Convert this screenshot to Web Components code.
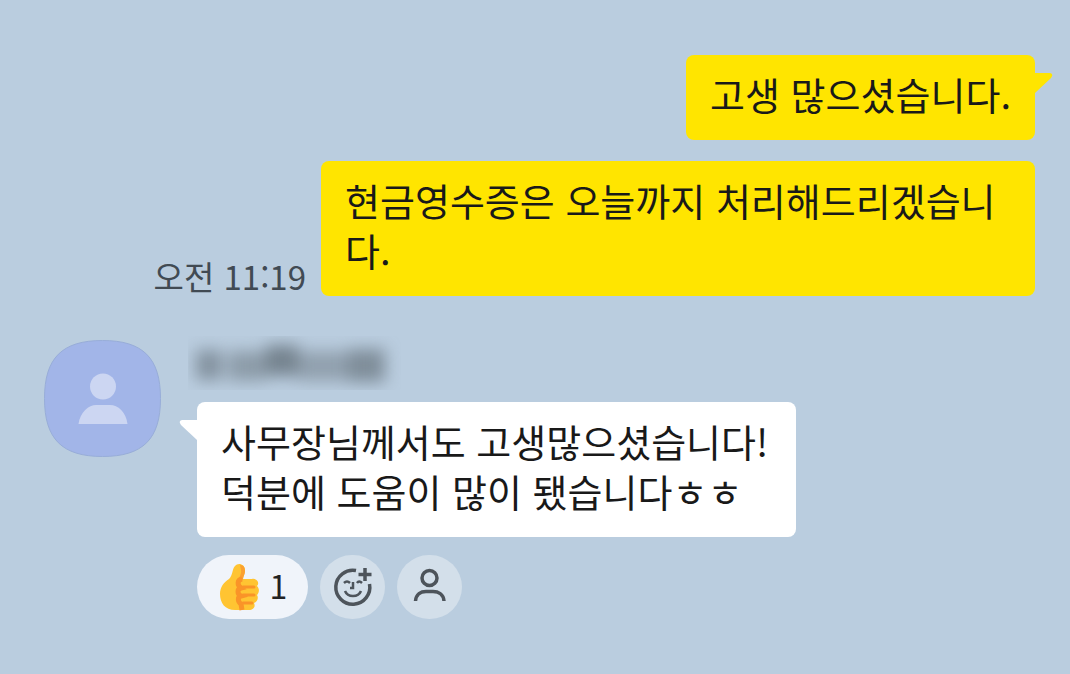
<!DOCTYPE html>
<html lang="ko">
<head>
<meta charset="utf-8">
<meta name="viewport" content="width=device-width, initial-scale=1">
<title>채팅</title>
<style>
  body { margin: 0; min-height: 100vh; background: #bacddf; font-family: "Noto Sans CJK KR", "Noto Sans", sans-serif; color: #191919; }
</style>
</head>
<body>
<chat-room>
  <chat-row side="mine"><chat-bubble side="mine" tail>고생 많으셨습니다.</chat-bubble></chat-row>
  <chat-row side="mine"><chat-time>오전 11:19</chat-time><chat-bubble side="mine">현금영수증은 오늘까지 처리해드리겠습니다.</chat-bubble></chat-row>
  <chat-message>
    <chat-avatar slot="avatar"></chat-avatar>
    <hidden-name slot="name"></hidden-name>
    <chat-bubble side="theirs" tail>사무장님께서도 고생많으셨습니다!<br>덕분에 도움이 많이 됐습니다ㅎㅎ</chat-bubble>
    <chat-reactions slot="reactions" count="1"></chat-reactions>
  </chat-message>
</chat-room>

<script>
  const define = (name, html, setup) => {
    const template = document.createElement('template');
    template.innerHTML = html;
    customElements.define(name, class extends HTMLElement {
      constructor() {
        super();
        this.attachShadow({ mode: 'open' }).append(template.content.cloneNode(true));
      }
      connectedCallback() { if (setup) setup(this, this.shadowRoot); }
    });
  };

  define('chat-room', `
    <style>
      :host { display: block; }
      main { display: flex; flex-direction: column; gap: 21px; padding: 55px 35px 55px 44px; }
    </style>
    <main><slot></slot></main>`);

  define('chat-row', `
    <style>
      :host { display: flex; align-items: flex-end; gap: 15px; }
      :host([side="mine"]) { justify-content: flex-end; }
    </style>
    <slot></slot>`);

  define('chat-bubble', `
    <style>
      :host { display: block; position: relative; box-sizing: border-box; width: fit-content; max-width: 714px; padding: 14px 24px 21px; border-radius: 8px; font-size: 38px; line-height: 50px; word-break: break-all; }
      :host([side="mine"]) { background: #ffe500; }
      :host([side="theirs"]) { background: #fff; padding-right: 28px; }
      svg { display: none; position: absolute; top: 17px; width: 19px; height: 22px; }
      :host([tail]) svg { display: block; }
      :host([side="mine"]) svg { left: 100%; margin-left: -1px; fill: #ffe500; }
      :host([side="theirs"]) svg { right: 100%; margin-right: -1px; fill: #fff; transform: scaleX(-1); }
    </style>
    <slot></slot>
    <svg viewBox="0 0 19 22" aria-hidden="true"><path d="M0 1H16Q20 2 17 6L1 21H0Z"/></svg>`);

  define('chat-time', `
    <style>
      :host { display: block; flex: none; font-size: 33px; line-height: 40px; color: #414a53; }
    </style>
    <time><slot></slot></time>`);

  define('chat-message', `
    <style>
      :host { display: flex; align-items: flex-start; gap: 36px; margin-top: 19px; }
      .body { display: flex; flex-direction: column; min-width: 0; }
      .reactions { margin-top: 18px; }
    </style>
    <slot name="avatar"></slot>
    <div class="body">
      <slot name="name"></slot>
      <slot></slot>
      <div class="reactions"><slot name="reactions"></slot></div>
    </div>`);

  define('chat-avatar', `
    <style>
      :host { display: block; flex: none; width: 117px; height: 117px; margin-top: 4px; }
      svg { display: block; width: 100%; height: 100%; }
    </style>
    <svg viewBox="0 0 117 117" role="img" aria-label="프로필">
      <path d="M58.500 .5C99 .5 116.500 18 116.500 58.500S99 116.500 58.500 116.500.5 99 .5 58.500 18 .5 58.500 .5Z" fill="#a2b5e8" stroke="#98add8"/>
      <circle cx="59" cy="46.500" r="13" fill="#ccd6f2"/>
      <path d="M34.500 84C36 72 45 65 52 65H66C74 65 82 72 83.500 84Z" fill="#ccd6f2"/>
    </svg>`);

  define('hidden-name', `
    <style>
      :host { display: block; width: 213px; height: 54px; margin: 0 0 12px -9px; overflow: hidden; }
      svg { display: block; width: 100%; height: 100%; }
    </style>
    <svg viewBox="0 0 213 54" aria-hidden="true">
      <defs><filter id="soft" x="-20%" y="-100%" width="140%" height="300%" color-interpolation-filters="sRGB"><feGaussianBlur stdDeviation="8"/></filter></defs>
      <g fill="#5f6b74" filter="url(#soft)">
        <rect x="8" y="14" width="26" height="30" opacity=".6"/>
        <rect x="40" y="15" width="38" height="30" opacity=".5"/>
        <rect x="78" y="9" width="32" height="31" opacity=".75"/>
        <rect x="110" y="15" width="50" height="30" opacity=".45"/>
        <rect x="160" y="13" width="37" height="33" opacity=".65"/>
      </g>
    </svg>`);

  define('chat-reactions', `
    <style>
      :host { display: flex; gap: 12px; }
      button { display: flex; align-items: center; justify-content: center; box-sizing: border-box; width: 65px; height: 64px; margin: 0; padding: 0; border: 0; border-radius: 33px; background: #d3dfea; color: #4d545b; font: inherit; cursor: pointer; }
      button.like { width: 111px; gap: 10px; background: #f0f4fa; color: #222; font-size: 32px; line-height: 40px; }
      .like span { padding-bottom: 4px; }
      svg { display: block; width: 42px; height: 42px; }
      .line { fill: none; stroke: currentColor; stroke-width: 3.500; }
      .like svg { height: 50px; }
    </style>
    <button class="like" type="button" aria-label="좋아요">
      <svg viewBox="0 0 42 50" aria-hidden="true">
        <path d="M17 4C20 0 27 2 27 8C27 12 25 14 25 17H34C39 16 42 21 39 24C42 27 41 31 39 33C41 36 39 40 36 41C38 45 35 48 31 48H17C7 48 2 41 2 32C2 25 6 20 11 17C15 13 14 7 17 4Z" fill="#ffc432"/>
        <path d="M22 3C26 3 27 6 27 9C27 13 25 14 25 18L21 20C20 16 24 12 23 8Z" fill="#fba030"/>
        <path d="M24 17C19 18 19 23 23 26C19 27 19 32 23 34C19 35 20 40 23 42L24 48" fill="none" stroke="#fa9428" stroke-width="5"/>
        <path d="M25 25H36M25 33H36M25 41H34" stroke="#fa9428" stroke-width="3" stroke-linecap="round"/>
      </svg>
      <span></span>
    </button>
    <button type="button" aria-label="공감 추가">
      <svg class="line" viewBox="0 0 42 42" aria-hidden="true">
        <path d="M24 4.500A17 17 0 1 0 37.500 18"/>
        <path d="M33 2V15M26.500 8.500H39.500" />
        <path d="M12 17Q15 14 18 17M25 17Q27 14 30 17M21 16V22H18M13 25Q15 30 21 30T29 25" stroke-width="2.500"/>
      </svg>
    </button>
    <button type="button" aria-label="공감한 사람">
      <svg class="line" viewBox="0 0 42 42" aria-hidden="true">
        <circle cx="20.500" cy="12" r="7.500"/>
        <path d="M6.500 35C7 28 12 25.500 17 25.500H24C29 25.500 34.500 28 35 35"/>
      </svg>
    </button>`, (host, root) => {
      root.querySelector('.like span').textContent = host.getAttribute('count');
      root.querySelector('.like').setAttribute('aria-label', '좋아요 ' + host.getAttribute('count'));
    });
</script>
</body>
</html>
